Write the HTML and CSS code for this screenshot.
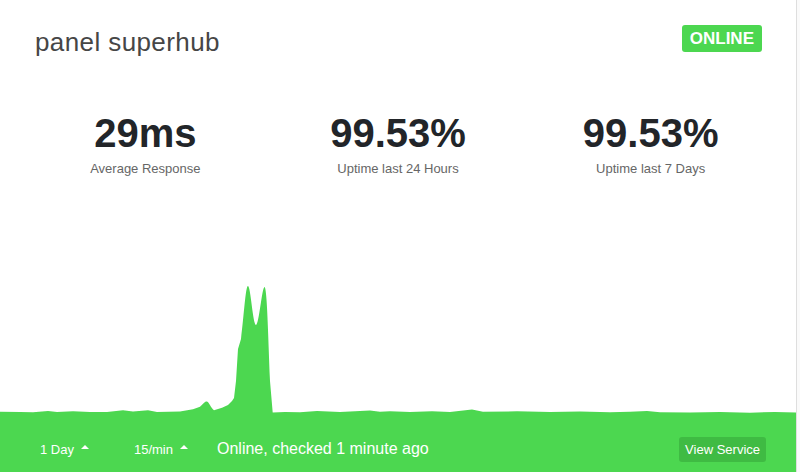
FILE: index.html
```html
<!DOCTYPE html>
<html lang="en">
<head>
<meta charset="utf-8">
<title>panel superhub</title>
<link rel="stylesheet" href="styles.css">
</head>
<body>
<div class="card">
  <div class="header">
    <h1 class="title">panel superhub</h1>
    <span class="badge">ONLINE</span>
  </div>
  <div class="stats">
    <div class="stat">
      <div class="value">29ms</div>
      <div class="label">Average Response</div>
    </div>
    <div class="stat">
      <div class="value">99.53%</div>
      <div class="label">Uptime last 24 Hours</div>
    </div>
    <div class="stat">
      <div class="value">99.53%</div>
      <div class="label">Uptime last 7 Days</div>
    </div>
  </div>
  <div class="chart">
    <svg class="chart-svg" viewBox="0 0 797 150" preserveAspectRatio="none">
      <path fill="#4cd750" d="M0 140.7 L20 141 L33 141.3 L48 140 L57 141 L73 140.3 L90 141 L107 141 L123 139.3 L133 140.5 L148 139.3 L157 141 L180 140.5 L193 138.3 L200 135.7 C203 133 205 130 207 130.5 C209 131 211 137 214 139.3 L218 138 L222 136.7 L228 134 L232 130 L234 127 L236 110 L238 78 L241 68 C244 45 245.5 15 248 15 C250.5 15 253 54 256 54 C259 54 262 16 264.5 16 C267 16 268 60 270 110 L272.7 141.5 L285 141 L300 141.3 L317 140 L340 141 L370 139.5 L380 140.8 L390 140.2 L410 141 L432 140.2 L450 141 L472 138.5 L483 140.8 L517 140.3 L550 141 L580 140.5 L610 141.3 L630 140.8 L647 140 L660 141.3 L690 141.5 L720 141 L750 141.7 L775 141 L797 141.5 L797 150 L0 150 Z"/>
    </svg>
  </div>
  <div class="footer">
    <span class="dropdown dropdown-range">1 Day <span class="caret"></span></span>
    <span class="dropdown dropdown-interval">15/min <span class="caret"></span></span>
    <span class="status">Online, checked 1 minute ago</span>
    <span class="view-btn">View Service</span>
  </div>
</div>
</body>
</html>
```

FILE: styles.css
```css
html, body {
  margin: 0;
  padding: 0;
}
body {
  background: #fafafa;
  font-family: "Liberation Sans", Arial, sans-serif;
}
.card {
  width: 796px;
  height: 472px;
  background: #fff;
  border-right: 1px solid #dedede;
  display: flex;
  flex-direction: column;
  overflow: hidden;
}
.header {
  display: flex;
  justify-content: space-between;
  align-items: flex-start;
  padding: 25px 34px 0 35px;
}
.title {
  margin: 2px 0 0 0;
  font-size: 26px;
  line-height: 30px;
  letter-spacing: 0.4px;
  font-weight: normal;
  color: #464646;
}
.badge {
  background: #4cd750;
  color: #fff;
  font-weight: bold;
  font-size: 17px;
  line-height: 27px;
  height: 27px;
  padding: 0 8px;
  border-radius: 3px;
}
.stats {
  display: grid;
  grid-template-columns: repeat(3, 1fr);
  padding: 0 19px;
  margin-top: 52px;
}
.stat {
  text-align: center;
}
.value {
  font-size: 40px;
  line-height: 48px;
  font-weight: bold;
  color: #222529;
}
.label {
  margin-top: 4px;
  font-size: 13px;
  line-height: 16px;
  color: #666;
}
.chart {
  margin-top: auto;
  height: 150px;
}
.chart-svg {
  display: block;
  width: 797px;
  height: 150px;
}
.footer {
  height: 52px;
  box-sizing: border-box;
  background: #4cd750;
  display: flex;
  align-items: center;
  padding: 6px 30px 0 40px;
  color: #fff;
  margin-top: -1px;
}
.dropdown {
  font-size: 13px;
  display: inline-flex;
  align-items: center;
}
.dropdown-range {
  margin-right: 45px;
}
.dropdown-interval {
  margin-right: 29px;
}
.caret {
  display: inline-block;
  width: 0;
  height: 0;
  margin-left: 7px;
  border-left: 4px solid transparent;
  border-right: 4px solid transparent;
  border-bottom: 4px solid #fff;
  position: relative;
  top: -2px;
}
.status {
  font-size: 16px;
}
.view-btn {
  margin-left: auto;
  background: #3fbb43;
  border-radius: 3px;
  font-size: 13px;
  line-height: 25px;
  padding: 0 6px;
}
```
